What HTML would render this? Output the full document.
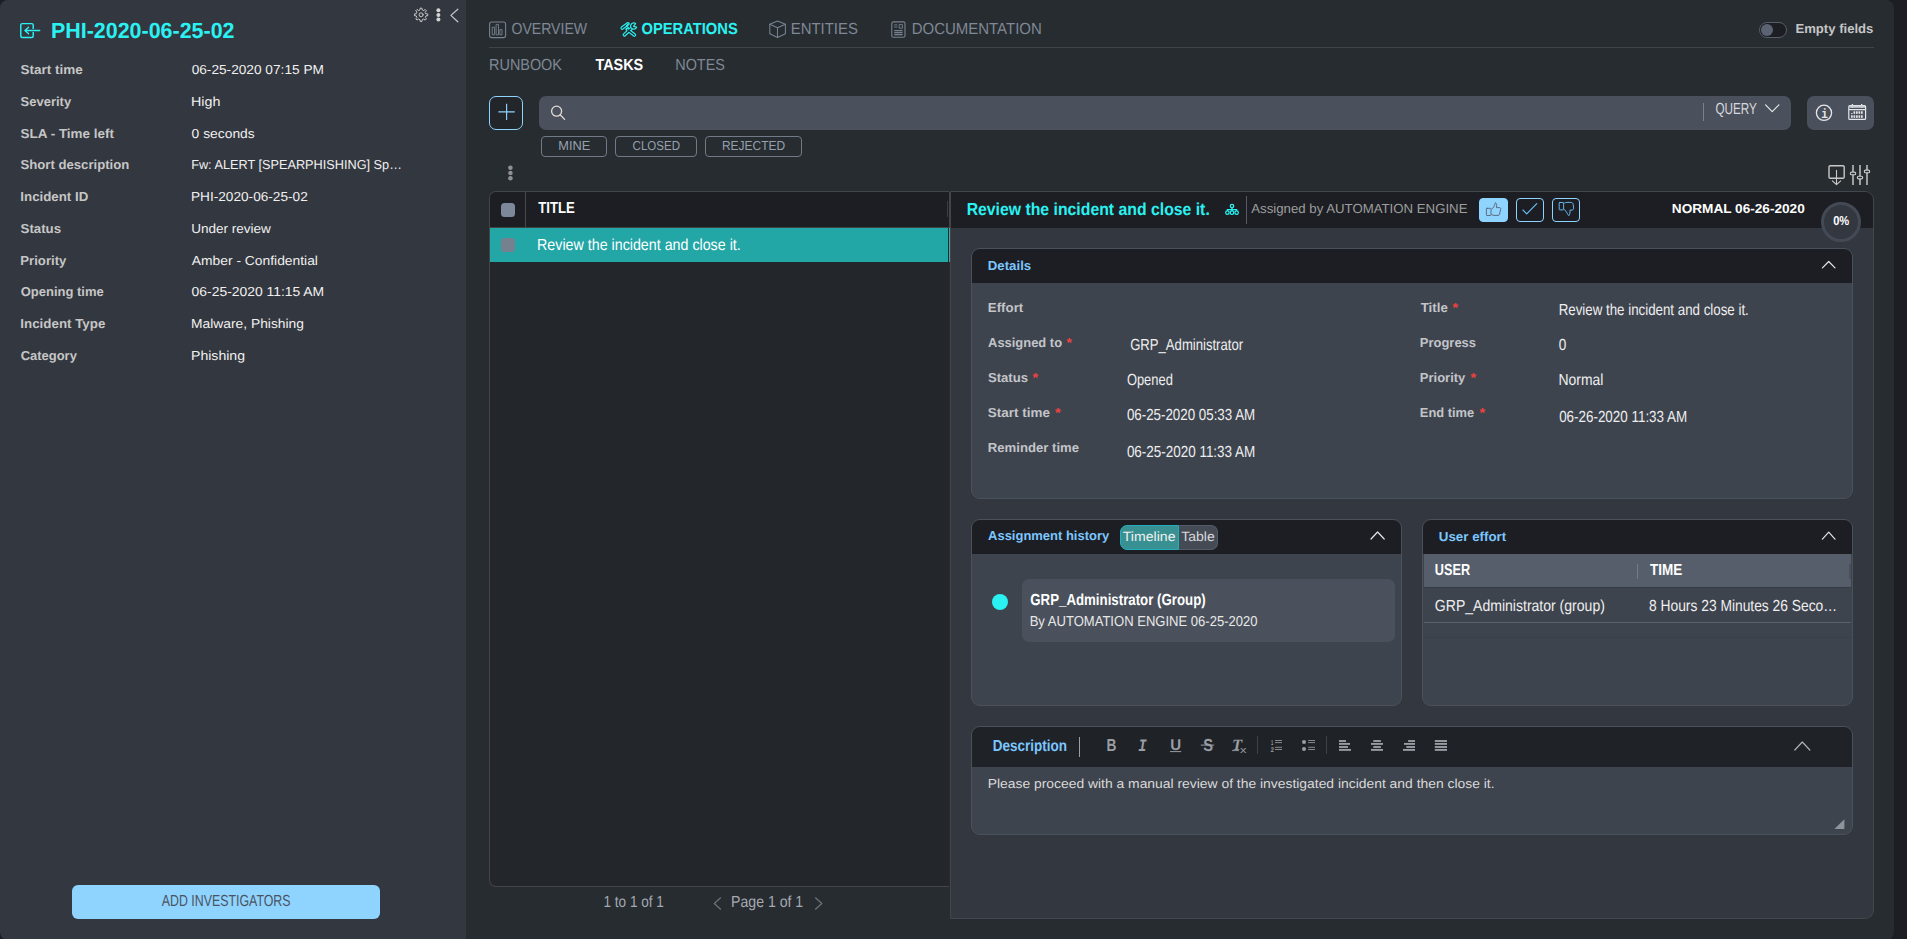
<!DOCTYPE html>
<html lang="en">
<head>
<meta charset="utf-8">
<title>PHI-2020-06-25-02 - Tasks</title>
<style>
*{box-sizing:border-box;margin:0;padding:0}
html,body{width:1907px;height:939px;overflow:hidden;background:#1c1e23}
body{position:relative;font-family:"Liberation Sans",sans-serif;font-size:13px;color:#e6e6e6}
.a{position:absolute}
.t{position:absolute;white-space:nowrap;line-height:1;transform-origin:0 0;text-rendering:geometricPrecision}
.b{font-weight:bold}
#app{position:absolute;left:0;top:0;width:1894px;height:940px;border-radius:8px;overflow:hidden;background:#272c31}
#side{position:absolute;left:0;top:0;width:466px;height:940px;background:#33373f}
#addinv{position:absolute;left:72px;top:885px;width:308px;height:34px;background:#8fd3ff;border-radius:6px}
.hr{position:absolute;background:#3f444b;height:1px}
.chip{position:absolute;height:21px;border:1px solid #727a87;border-radius:4px;top:136px}
#tbl{position:absolute;left:489px;top:191px;width:460px;height:696px;border:1px solid #444547;border-right:0;border-radius:7px 0 0 7px;background:#23262b;overflow:hidden}
#tbl .hd{position:absolute;left:0;top:0;width:460px;height:36px;background:#1c1e23;border-bottom:1px solid #434345}
#tbl .row{position:absolute;left:0;top:36px;width:458px;height:34px;background:#22a6a6}
.cb{position:absolute;width:14px;height:14px;border-radius:3.5px;background:#7d899b}
#det{position:absolute;left:950px;top:191px;width:924px;height:728px;border:1px solid #41464f;border-left:1px solid #454545;border-radius:0 9px 9px 0;background:#33373f;overflow:hidden}
#det .hd{position:absolute;left:0;top:0;right:0;height:36px;background:#1c1e23}
.card{position:absolute;border:1px solid #4b515b;border-radius:9px;background:#3e444e;overflow:hidden}
.card .ch{position:absolute;left:0;top:0;right:0;background:#1c1e23}
.btn{position:absolute;top:198px;width:29px;height:24px;border-radius:4px;border:1px solid #8fd3ff;background:#1c1e23}
svg{position:absolute;left:0;top:0;overflow:visible}
</style>
</head>
<body>
<div id="app">
  <div id="side">
    <div id="addinv"></div>
  </div>

  <div class="hr" style="left:489px;top:47px;width:1385px"></div>

  <!-- empty-fields toggle -->
  <div class="a" style="left:1759px;top:22px;width:28px;height:16px;border-radius:8px;background:#1c1e23;border:1px solid #575d6a"></div>
  <div class="a" style="left:1761px;top:24px;width:12px;height:12px;border-radius:6px;background:#5c6372"></div>

  <!-- toolbar row -->
  <div class="a" style="left:489px;top:96px;width:34px;height:34px;border:1.5px solid #8fd3ff;border-radius:7px;background:#22252a"></div>
  <div class="a" style="left:539px;top:96px;width:1252px;height:34px;border-radius:7px;background:#4a505c"></div>
  <div class="a" style="left:1703px;top:103px;width:1px;height:18px;background:#7a808b"></div>
  <div class="a" style="left:1807px;top:96px;width:67px;height:34px;border-radius:7px;background:#4a505c"></div>

  <div class="chip" style="left:541px;width:66px"></div>
  <div class="chip" style="left:615px;width:82px"></div>
  <div class="chip" style="left:705px;width:97px"></div>

  <!-- table -->
  <div id="tbl">
    <div class="hd"></div>
    <div class="a" style="left:35px;top:0;width:1px;height:36px;background:#47484b"></div>
    <div class="a" style="left:457px;top:9px;width:1px;height:16px;background:#3a3d44"></div>
    <div class="row"></div>
  </div>
  <div class="a" style="left:949px;top:192px;width:1px;height:36px;background:#454545"></div>
  <div class="a" style="left:949px;top:228px;width:1px;height:34px;background:#2ab0b0"></div>
  <div class="cb" style="left:501px;top:203px"></div>
  <div class="cb" style="left:501px;top:238px;background:#76818f"></div>

  <!-- detail panel -->
  <div id="det"><div class="hd"></div></div>
  <div class="a" style="left:1246px;top:196px;width:1px;height:28px;background:#555b67"></div>
  <div class="btn" style="left:1479px;background:#8fd3ff"></div>
  <div class="btn" style="left:1516px;width:28px"></div>
  <div class="btn" style="left:1552px;width:28px"></div>
  <div class="a" style="left:1821px;top:202px;width:40px;height:40px;border-radius:20px;border:3.3px solid #434a56;background:#33373f"></div>

  <!-- details card -->
  <div class="card" style="left:971px;top:248px;width:882px;height:251px"><div class="ch" style="height:34px"></div></div>

  <!-- assignment history card -->
  <div class="card" style="left:971px;top:519px;width:431px;height:187px"><div class="ch" style="height:34px"></div></div>
  <div class="a" style="left:1120px;top:525px;width:59px;height:25px;border-radius:7px 0 0 7px;background:#389092;border:1px solid #24aebb"></div>
  <div class="a" style="left:1179px;top:525px;width:39px;height:25px;border-radius:0 7px 7px 0;background:#454b55;border:1px solid #565c67;border-left:0"></div>
  <div class="a" style="left:1022px;top:579px;width:373px;height:63px;border-radius:7px;background:#4a505c"></div>
  <div class="a" style="left:992px;top:594px;width:16px;height:16px;border-radius:8px;background:#2af2f2"></div>

  <!-- user effort card -->
  <div class="card" style="left:1422px;top:519px;width:431px;height:187px">
    <div class="ch" style="height:34px"></div>
    <div class="a" style="left:1px;top:34px;width:427px;height:33px;background:#575e6b"></div>
    <div class="a" style="left:214px;top:44px;width:1px;height:15px;background:#737a87"></div>
    <div class="a" style="left:426px;top:44px;width:2px;height:15px;background:#4a505c"></div>
    <div class="a" style="left:1px;top:67px;width:427px;height:1px;background:#363b44"></div>
    <div class="a" style="left:1px;top:102px;width:427px;height:1px;background:#5a606c"></div>
    <div class="a" style="left:1px;top:117px;width:427px;height:1px;background:#393e47"></div>
  </div>

  <!-- description card -->
  <div class="card" style="left:971px;top:726px;width:882px;height:109px"><div class="ch" style="height:40px;background:#1f2227"></div></div>
  <div class="a" style="left:1079px;top:737px;width:1px;height:20px;background:#9aa0a8"></div>
  <div class="a" style="left:1257px;top:736px;width:1px;height:18px;background:#3d424b"></div>
  <div class="a" style="left:1326px;top:736px;width:1px;height:18px;background:#3d424b"></div>

<svg width="1907" height="939" viewBox="0 0 1907 939" fill="none" stroke-linecap="round" stroke-linejoin="round">
<g stroke="#2af2f2" stroke-width="1.45" stroke-linecap="round" stroke-linejoin="round"><path d="M33.2 29.0V25.1Q33.2 23.6 31.7 23.6H22.3Q20.8 23.6 20.8 25.1V35.9Q20.8 37.4 22.3 37.4H31.7Q33.2 37.4 33.2 35.9V32.0" stroke-linecap="butt"/><path d="M39.7 30.5H25M28.6 27.3L24.9 30.5L28.6 33.7"/></g>
<g stroke="#c9c9c9" stroke-width="1.0"><path d="M425.98 13.71 L427.74 13.91 L427.74 15.69 L425.98 15.89 L425.32 17.48 L426.43 18.86 L425.16 20.13 L423.78 19.02 L422.19 19.68 L421.99 21.44 L420.21 21.44 L420.01 19.68 L418.42 19.02 L417.04 20.13 L415.77 18.86 L416.88 17.48 L416.22 15.89 L414.46 15.69 L414.46 13.91 L416.22 13.71 L416.88 12.12 L415.77 10.74 L417.04 9.47 L418.42 10.58 L420.01 9.92 L420.21 8.16 L421.99 8.16 L422.19 9.92 L423.78 10.58 L425.16 9.47 L426.43 10.74 L425.32 12.12Z"/><circle cx="421.1" cy="14.8" r="2.0"/></g>
<g fill="#d4d4d4"><circle cx="438.4" cy="10.3" r="2"/><circle cx="438.4" cy="14.9" r="2"/><circle cx="438.4" cy="19.5" r="2"/></g>
<path d="M457.8 9.2L450.9 15.4L457.8 21.8" stroke="#c9c9c9" stroke-width="1.2"/>
<g stroke="#78828f" stroke-width="1.1"><rect x="489.6" y="22" width="16" height="15.6" rx="2"/><g stroke-width="0.9"><rect x="492.6" y="27.2" width="2" height="7.6"/><rect x="496.5" y="24.4" width="2" height="10.4"/><rect x="500.2" y="29.6" width="1.8" height="5.2"/></g></g>
<g stroke="#2af2f2" stroke-width="3.6"><path d="M624.4 34.8L631.2 28.6"/><path d="M627.2 29.4L634.4 35.0"/><path d="M622.2 28.0L628.0 23.8"/></g>
<g stroke="#272c31" stroke-width="1.3"><path d="M624.4 34.8L631.2 28.6"/><path d="M627.6 29.8L634.4 35.0"/><path d="M622.2 28.0L628.0 23.8"/></g>
<path d="M635.6 23.6A3.1 3.1 0 1 0 636.6 27.2L633.6 26.4Z" stroke="#2af2f2" stroke-width="1.2" fill="#272c31"/>
<path d="M628.3 23.6L626.2 26.0L628.6 27.6" stroke="#2af2f2" stroke-width="1.1"/>
<g stroke="#78828f" stroke-width="1.05"><path d="M777.5 21L785.4 24.3V33.8L777.5 37.5L769.8 33.8V24.3Z"/><path d="M769.8 24.3L777.5 27.8L785.4 24.3M777.5 27.8V37.5"/></g>
<g stroke="#78828f" stroke-width="1.1"><rect x="891.8" y="21.9" width="13.2" height="15.4" rx="1.6"/><g stroke-width="0.9" stroke-linecap="butt"><path d="M894.2 24.9H897.4M894.2 27H897.4"/><rect x="899.2" y="24.6" width="3.2" height="3.6"/><path d="M894.2 30.6H902.6M894.2 32.6H902.6M894.2 34.6H902.6" stroke-width="1.3"/></g></g>
<path d="M498.4 111.9H514.8M506.6 103.7V120.1" stroke="#8fd3ff" stroke-width="1.15" stroke-linecap="butt"/>
<g stroke="#e2ddd6" stroke-width="1.3"><circle cx="556.6" cy="111.2" r="5"/><path d="M560.4 115L564.6 119.4"/></g>
<path d="M1765.6 104.9L1772.2 111.6L1778.9 104.9" stroke="#e4e6e9" stroke-width="1.2"/>
<g stroke="#e4e6e9"><circle cx="1824" cy="112.8" r="7.6" stroke-width="1.3"/></g>
<g stroke="#e4e6e9" stroke-width="1.2" stroke-linecap="butt" stroke-linejoin="miter"><rect x="1848.8" y="105.6" width="16.8" height="13.8" rx="1"/><path d="M1848.8 109.7H1865.6"/><path d="M1852.4 104V108M1861.7 104V108" stroke-width="1.3"/></g>
<rect x="1849.4" y="105.8" width="15.6" height="2" fill="#c9ccd1"/>
<g fill="#e4e6e9"><rect x="1853.5" y="111.3" width="1.7" height="2.5"/><rect x="1856.0" y="111.3" width="1.7" height="2.5"/><rect x="1858.5" y="111.3" width="1.7" height="2.5"/><rect x="1861.0" y="111.3" width="1.7" height="2.5"/><rect x="1851.0" y="115.3" width="1.7" height="2.5"/><rect x="1853.5" y="115.3" width="1.7" height="2.5"/><rect x="1856.0" y="115.3" width="1.7" height="2.5"/><rect x="1858.5" y="115.3" width="1.7" height="2.5"/><rect x="1861.0" y="115.3" width="1.7" height="2.5"/><rect x="1851" y="113" width="1.7" height="0.8"/></g>
<g fill="#8e9093"><circle cx="510.4" cy="167.8" r="2.3"/><circle cx="510.4" cy="173" r="2.3"/><circle cx="510.4" cy="178.2" r="2.3"/></g>
<g stroke="#c9c9c9"><rect x="1829" y="165.7" width="15.2" height="12.6" rx="1.3" stroke-width="1.4"/><path d="M1836.5 170.2V184.4M1832.4 180.8L1836.5 184.7L1840.7 180.8" stroke-width="1.1"/></g>
<g stroke="#c9c9c9" stroke-width="1.45" stroke-linecap="butt"><path d="M1853 165V185M1860 165V185M1867 165V185"/></g>
<rect x="1850.3" y="172.1" width="5.4" height="2.6" rx="1.3" fill="#272c31" stroke="#c9c9c9" stroke-width="1.1"/>
<rect x="1857.3" y="176.29999999999998" width="5.4" height="2.6" rx="1.3" fill="#272c31" stroke="#c9c9c9" stroke-width="1.1"/>
<rect x="1864.3" y="170.1" width="5.4" height="2.6" rx="1.3" fill="#272c31" stroke="#c9c9c9" stroke-width="1.1"/>
<g stroke="#2af2f2" stroke-width="1.25"><circle cx="1232" cy="206.1" r="1.75"/><circle cx="1227.4" cy="212.7" r="1.75"/><circle cx="1232" cy="212.7" r="1.75"/><circle cx="1236.6" cy="212.7" r="1.75"/><path d="M1232 208V211M1227.4 211V209.5H1236.6V211" stroke-linecap="butt" stroke-linejoin="miter"/></g>
<g stroke="#566472" stroke-width="0.9"><rect x="1486.4" y="208.3" width="4.6" height="7.2" rx="0.6"/><path d="M1491.8 209.2C1493.6 207.8 1494.6 205.4 1495.3 202.8C1496.6 203 1497 205 1496.4 207.6H1499.6C1500.6 207.6 1500.9 208.6 1500.6 209.4L1499.6 214.2C1499.4 215 1498.8 215.4 1498 215.4H1494C1493.2 215.4 1492.6 214.9 1491.8 214.6"/></g>
<path d="M1522.6 209.7L1526.7 213.8L1537 203.4" stroke="#6cc4ff" stroke-width="1.1" stroke-linecap="butt"/>
<g stroke="#6cc4ff" stroke-width="0.9"><rect x="1559.2" y="202.5" width="4.4" height="7.4" rx="0.6"/><path d="M1564.6 203C1565.4 202.5 1566 202.4 1567 202.4H1571C1572.2 202.4 1573 203.2 1573.2 204.4L1573.6 208C1573.7 209.2 1573 210.1 1572 210.1H1569.9C1570.3 212.2 1569.9 214.6 1568.8 215.7C1567.4 214.2 1566.6 211.6 1564.6 209.6"/></g>
<path d="M1822.4 267.8L1828.7 261.5L1835 267.8" stroke="#e4e6e9" stroke-width="1.2"/>
<path d="M1371 539L1377.6 532L1384.2 539" stroke="#e4e6e9" stroke-width="1.2"/>
<path d="M1822.4 539.2L1828.7 532.2L1835 539.2" stroke="#e4e6e9" stroke-width="1.2"/>
<path d="M1794.8 750L1802.3 742L1809.8 750" stroke="#aeb2b8" stroke-width="1.2"/>
<path d="M720.6 897.8L714.3 903.5L720.6 909.2" stroke="#6e737c" stroke-width="1.2"/>
<path d="M815.5 897.8L821.8 903.5L815.5 909.2" stroke="#6e737c" stroke-width="1.2"/>
<g stroke="#9a9da3" stroke-width="0.85" stroke-linecap="butt">
<path d="M1275 740.5H1282M1308.2 740.5H1315"/>
<path d="M1275 742.6H1282M1308.2 742.6H1315"/>
<path d="M1275 747.3H1282M1308.2 747.3H1315"/>
<path d="M1275 749.5H1282M1308.2 749.5H1315"/>
</g>
<g fill="#9a9da3"><circle cx="1304" cy="742" r="2.05"/><circle cx="1304" cy="749" r="2.05"/></g>
<g stroke="#9a9da3" stroke-width="1.9" stroke-linecap="butt">
<path d="M1339 741H1346"/>
<path d="M1339 743.9H1350"/>
<path d="M1339 747H1348"/>
<path d="M1339 749.9H1351"/>
<path d="M1373.3 741H1380.9"/>
<path d="M1371 743.9H1383"/>
<path d="M1373.3 747H1380.9"/>
<path d="M1371 749.9H1383"/>
<path d="M1408.1 741H1415"/>
<path d="M1404 743.9H1415"/>
<path d="M1406.3 747H1415"/>
<path d="M1403 749.9H1415"/>
<path d="M1434.8 741H1447"/>
<path d="M1434.8 743.9H1447"/>
<path d="M1434.8 747H1447"/>
<path d="M1434.8 749.9H1447"/>
</g>
<g stroke="#9a9da3" stroke-linecap="butt"><path d="M1170 751.6H1181.2" stroke-width="1"/><path d="M1200.8 745.1H1214.2" stroke-width="1"/><path d="M1232 750.6H1239" stroke-width="0.9"/></g>
<path d="M1844.4 819.2V829H1834.4Z" fill="#8f949c" stroke="none"/>
</svg>
<div class="t" style="left:50px;top:20px;font-size:21.9px;color:#2af2f2;transform:translateX(0.93px) scaleX(0.9798);font-weight:bold">PHI-2020-06-25-02</div>
<div class="t" style="left:20px;top:63px;font-size:13.0px;color:#c6c6c6;transform:translateX(0.54px) scaleX(1.0398);font-weight:bold">Start time</div>
<div class="t" style="left:191px;top:63px;font-size:13.0px;color:#f0f0f0;transform:translateX(0.63px) scaleX(1.0518)">06-25-2020 07:15 PM</div>
<div class="t" style="left:20px;top:95px;font-size:13.0px;color:#c6c6c6;transform:translateX(0.58px) scaleX(0.9991);font-weight:bold">Severity</div>
<div class="t" style="left:190px;top:95px;font-size:13.0px;color:#f0f0f0;transform:translateX(0.97px) scaleX(1.0993)">High</div>
<div class="t" style="left:20px;top:127px;font-size:13.0px;color:#c6c6c6;transform:translateX(0.54px) scaleX(1.0348);font-weight:bold">SLA - Time left</div>
<div class="t" style="left:191px;top:127px;font-size:13.0px;color:#f0f0f0;transform:translateX(0.60px) scaleX(1.0648)">0 seconds</div>
<div class="t" style="left:20px;top:158px;font-size:13.0px;color:#c6c6c6;transform:translateX(0.58px) scaleX(1.0096);font-weight:bold">Short description</div>
<div class="t" style="left:191px;top:158px;font-size:13.0px;color:#f0f0f0;transform:translateX(0.13px) scaleX(0.9778)">Fw: ALERT [SPEARPHISHING] Sp…</div>
<div class="t" style="left:20px;top:190px;font-size:13.0px;color:#c6c6c6;transform:translateX(0.32px) scaleX(1.0223);font-weight:bold">Incident ID</div>
<div class="t" style="left:190px;top:190px;font-size:13.0px;color:#f0f0f0;transform:translateX(0.92px) scaleX(1.0499)">PHI-2020-06-25-02</div>
<div class="t" style="left:20px;top:222px;font-size:13.0px;color:#c6c6c6;transform:translateX(0.54px) scaleX(1.0210);font-weight:bold">Status</div>
<div class="t" style="left:191px;top:222px;font-size:13.0px;color:#f0f0f0;transform:translateX(0.18px) scaleX(1.0398)">Under review</div>
<div class="t" style="left:20px;top:254px;font-size:13.0px;color:#c6c6c6;transform:translateX(0.34px) scaleX(1.0105);font-weight:bold">Priority</div>
<div class="t" style="left:191px;top:254px;font-size:13.0px;color:#f0f0f0;transform:translateX(0.82px) scaleX(1.0643)">Amber - Confidential</div>
<div class="t" style="left:20px;top:285px;font-size:13.0px;color:#c6c6c6;transform:translateX(0.66px) scaleX(1.0004);font-weight:bold">Opening time</div>
<div class="t" style="left:191px;top:285px;font-size:13.0px;color:#f0f0f0;transform:translateX(0.60px) scaleX(1.0686)">06-25-2020 11:15 AM</div>
<div class="t" style="left:20px;top:317px;font-size:13.0px;color:#c6c6c6;transform:translateX(0.32px) scaleX(1.0268);font-weight:bold">Incident Type</div>
<div class="t" style="left:191px;top:317px;font-size:13.0px;color:#f0f0f0;transform:translateX(0.10px) scaleX(1.0626)">Malware, Phishing</div>
<div class="t" style="left:20px;top:349px;font-size:13.0px;color:#c6c6c6;transform:translateX(0.68px) scaleX(0.9966);font-weight:bold">Category</div>
<div class="t" style="left:191px;top:349px;font-size:13.0px;color:#f0f0f0;transform:translateX(0.03px) scaleX(1.0820)">Phishing</div>
<div class="t" style="left:161px;top:894px;font-size:16.0px;color:#4a5361;transform:translateX(0.76px) scaleX(0.7731)">ADD INVESTIGATORS</div>
<div class="t" style="left:511px;top:22px;font-size:16.0px;color:#7f8894;transform:translateX(0.45px) scaleX(0.8804)">OVERVIEW</div>
<div class="t" style="left:641px;top:22px;font-size:16.0px;color:#2af2f2;transform:translateX(0.45px) scaleX(0.9202);font-weight:bold">OPERATIONS</div>
<div class="t" style="left:790px;top:22px;font-size:16.0px;color:#7f8894;transform:translateX(0.79px) scaleX(0.9316)">ENTITIES</div>
<div class="t" style="left:911px;top:22px;font-size:16.0px;color:#7f8894;transform:translateX(0.67px) scaleX(0.9364)">DOCUMENTATION</div>
<div class="t" style="left:489px;top:58px;font-size:16.0px;color:#7f8894;transform:translateX(0.06px) scaleX(0.9009)">RUNBOOK</div>
<div class="t" style="left:595px;top:58px;font-size:16.0px;color:#ffffff;transform:translateX(0.43px) scaleX(0.8998);font-weight:bold">TASKS</div>
<div class="t" style="left:675px;top:58px;font-size:16.0px;color:#7f8894;transform:translateX(0.26px) scaleX(0.9000)">NOTES</div>
<div class="t" style="left:1795px;top:22px;font-size:13.0px;color:#c6c6c6;transform:translateX(0.46px) scaleX(1.0079);font-weight:bold">Empty fields</div>
<div class="t" style="left:1715px;top:102px;font-size:16.0px;color:#d6d8dc;transform:translateX(0.42px) scaleX(0.7326)">QUERY</div>
<div class="t" style="left:558px;top:139px;font-size:13.0px;color:#96a0ad;transform:translateX(0.29px) scaleX(0.9854)">MINE</div>
<div class="t" style="left:632px;top:139px;font-size:13.0px;color:#96a0ad;transform:translateX(0.56px) scaleX(0.8891)">CLOSED</div>
<div class="t" style="left:721px;top:139px;font-size:13.0px;color:#96a0ad;transform:translateX(0.98px) scaleX(0.9199)">REJECTED</div>
<div class="t" style="left:538px;top:201px;font-size:16.0px;color:#ffffff;transform:translateX(0.29px) scaleX(0.8225);font-weight:bold">TITLE</div>
<div class="t" style="left:537px;top:238px;font-size:16.0px;color:#ffffff;transform:translateX(0.07px) scaleX(0.8910)">Review the incident and close it.</div>
<div class="t" style="left:603px;top:895px;font-size:16.0px;color:#a5a9b0;transform:translateX(0.55px) scaleX(0.8469)">1 to 1 of 1</div>
<div class="t" style="left:731px;top:895px;font-size:16.0px;color:#a5a9b0;transform:translateX(0.04px) scaleX(0.8812)">Page 1 of 1</div>
<div class="t" style="left:966px;top:201px;font-size:17.4px;color:#2af2f2;transform:translateX(0.63px) scaleX(0.9083);font-weight:bold">Review the incident and close it.</div>
<div class="t" style="left:1251px;top:202px;font-size:13.2px;color:#9e9e9e;transform:translateX(0.26px) scaleX(1.0023)">Assigned by AUTOMATION ENGINE</div>
<div class="t" style="left:1671px;top:202px;font-size:13.0px;color:#ffffff;transform:translateX(0.81px) scaleX(1.0476);font-weight:bold">NORMAL 06-26-2020</div>
<div class="t" style="left:1833px;top:214px;font-size:13.0px;color:#ffffff;transform:translateX(0.14px) scaleX(0.8553);font-weight:bold">0%</div>
<div class="t" style="left:987px;top:259px;font-size:13.0px;color:#7cc7ff;transform:translateX(0.78px) scaleX(1.0178);font-weight:bold">Details</div>
<div class="t" style="left:987px;top:301px;font-size:13.0px;color:#c3c5c9;transform:translateX(0.80px) scaleX(1.0230);font-weight:bold">Effort</div>
<div class="t" style="left:988px;top:336px;font-size:13.0px;color:#c3c5c9;transform:translateX(0.04px) scaleX(0.9945);font-weight:bold">Assigned to</div>
<div class="t" style="left:1066px;top:336px;font-size:13.0px;color:#f0423f;transform:translateX(0.54px) scaleX(1.0581);font-weight:bold">*</div>
<div class="t" style="left:987px;top:371px;font-size:13.0px;color:#c3c5c9;transform:translateX(0.89px) scaleX(1.0090);font-weight:bold">Status</div>
<div class="t" style="left:1032px;top:371px;font-size:13.0px;color:#f0423f;transform:translateX(0.54px) scaleX(1.1137);font-weight:bold">*</div>
<div class="t" style="left:987px;top:406px;font-size:13.0px;color:#c3c5c9;transform:translateX(0.86px) scaleX(1.0355);font-weight:bold">Start time</div>
<div class="t" style="left:1055px;top:406px;font-size:13.0px;color:#f0423f;transform:translateX(0.04px) scaleX(1.1182);font-weight:bold">*</div>
<div class="t" style="left:987px;top:441px;font-size:13.0px;color:#c3c5c9;transform:translateX(0.80px) scaleX(1.0110);font-weight:bold">Reminder time</div>
<div class="t" style="left:1130px;top:338px;font-size:16.0px;color:#eeeeee;transform:translateX(0.18px) scaleX(0.8189)">GRP_Administrator</div>
<div class="t" style="left:1126px;top:373px;font-size:16.0px;color:#eeeeee;transform:translateX(0.90px) scaleX(0.8062)">Opened</div>
<div class="t" style="left:1126px;top:408px;font-size:16.0px;color:#eeeeee;transform:translateX(0.89px) scaleX(0.8337)">06-25-2020 05:33 AM</div>
<div class="t" style="left:1126px;top:445px;font-size:16.0px;color:#eeeeee;transform:translateX(0.88px) scaleX(0.8405)">06-25-2020 11:33 AM</div>
<div class="t" style="left:1420px;top:301px;font-size:13.0px;color:#c3c5c9;transform:translateX(0.74px) scaleX(1.0203);font-weight:bold">Title</div>
<div class="t" style="left:1452px;top:301px;font-size:13.0px;color:#f0423f;transform:translateX(0.54px) scaleX(1.1137);font-weight:bold">*</div>
<div class="t" style="left:1419px;top:336px;font-size:13.0px;color:#c3c5c9;transform:translateX(0.84px) scaleX(0.9969);font-weight:bold">Progress</div>
<div class="t" style="left:1419px;top:371px;font-size:13.0px;color:#c3c5c9;transform:translateX(0.86px) scaleX(0.9979);font-weight:bold">Priority</div>
<div class="t" style="left:1470px;top:371px;font-size:13.0px;color:#f0423f;transform:translateX(0.54px) scaleX(1.1137);font-weight:bold">*</div>
<div class="t" style="left:1419px;top:406px;font-size:13.0px;color:#c3c5c9;transform:translateX(0.84px) scaleX(0.9908);font-weight:bold">End time</div>
<div class="t" style="left:1479px;top:406px;font-size:13.0px;color:#f0423f;transform:translateX(0.54px) scaleX(1.1137);font-weight:bold">*</div>
<div class="t" style="left:1558px;top:303px;font-size:16.0px;color:#eeeeee;transform:translateX(0.67px) scaleX(0.8317)">Review the incident and close it.</div>
<div class="t" style="left:1558px;top:338px;font-size:16.0px;color:#eeeeee;transform:translateX(0.84px) scaleX(0.8488)">0</div>
<div class="t" style="left:1558px;top:373px;font-size:16.0px;color:#eeeeee;transform:translateX(0.56px) scaleX(0.8689)">Normal</div>
<div class="t" style="left:1559px;top:410px;font-size:16.0px;color:#eeeeee;transform:translateX(0.13px) scaleX(0.8382)">06-26-2020 11:33 AM</div>
<div class="t" style="left:988px;top:529px;font-size:13.0px;color:#7cc7ff;transform:translateX(0.04px) scaleX(0.9986);font-weight:bold">Assignment history</div>
<div class="t" style="left:1122px;top:530px;font-size:13.3px;color:#f0f0f0;transform:translateX(0.80px) scaleX(1.0584)">Timeline</div>
<div class="t" style="left:1181px;top:530px;font-size:13.3px;color:#d6d8db;transform:translateX(0.19px) scaleX(1.0577)">Table</div>
<div class="t" style="left:1030px;top:593px;font-size:16.0px;color:#ffffff;transform:translateX(0.24px) scaleX(0.8295);font-weight:bold">GRP_Administrator (Group)</div>
<div class="t" style="left:1029px;top:615px;font-size:14.4px;color:#e8e8e8;transform:translateX(0.65px) scaleX(0.9066)">By AUTOMATION ENGINE 06-25-2020</div>
<div class="t" style="left:1438px;top:530px;font-size:13.0px;color:#7cc7ff;transform:translateX(0.80px) scaleX(1.0260);font-weight:bold">User effort</div>
<div class="t" style="left:1434px;top:563px;font-size:16.0px;color:#ffffff;transform:translateX(0.82px) scaleX(0.7920);font-weight:bold">USER</div>
<div class="t" style="left:1650px;top:563px;font-size:16.0px;color:#ffffff;transform:translateX(0.01px) scaleX(0.8414);font-weight:bold">TIME</div>
<div class="t" style="left:1434px;top:599px;font-size:16.0px;color:#eeeeee;transform:translateX(0.87px) scaleX(0.8769)">GRP_Administrator (group)</div>
<div class="t" style="left:1649px;top:599px;font-size:16.0px;color:#eeeeee;transform:translateX(0.01px) scaleX(0.8631)">8 Hours 23 Minutes 26 Seco…</div>
<div class="t" style="left:992px;top:739px;font-size:16.0px;color:#7cc7ff;transform:translateX(0.65px) scaleX(0.8449);font-weight:bold">Description</div>
<div class="t" style="left:987px;top:777px;font-size:13.0px;color:#d9d9d9;transform:translateX(0.67px) scaleX(1.0676)">Please proceed with a manual review of the investigated incident and then close it.</div>
<div class="t" style="left:1106px;top:737px;font-size:17.4px;color:#9a9da3;transform:translateX(0.55px) scaleX(0.7927);font-weight:bold">B</div>
<div class="t" style="left:1138px;top:739px;font-size:17.4px;color:#9a9da3;transform:translateX(0.15px) scaleX(0.8105);font-weight:bold;font-family:'Liberation Mono',monospace;font-style:italic">I</div>
<div class="t" style="left:1170px;top:738px;font-size:15.6px;color:#9a9da3;transform:translateX(0.29px) scaleX(0.9688);font-weight:bold">U</div>
<div class="t" style="left:1203px;top:737px;font-size:17.4px;color:#9a9da3;transform:translateX(0.14px) scaleX(0.8487);font-weight:bold">S</div>
<div class="t" style="left:1231px;top:738px;font-size:15.6px;color:#9a9da3;transform:translateX(0.98px) scaleX(1.0684);font-weight:bold;font-family:'Liberation Serif',serif;font-style:italic">T</div>
<div class="t" style="left:1270px;top:741px;font-size:6.8px;color:#9a9da3;transform:translateX(0.96px) scaleX(0.6000);font-weight:bold">1</div>
<div class="t" style="left:1270px;top:748px;font-size:6.8px;color:#9a9da3;transform:translateX(0.76px) scaleX(0.8385);font-weight:bold">2</div>
<div class="t" style="left:1239px;top:745px;font-size:9.4px;color:#9a9da3;transform:translateX(0.95px) scaleX(1.3741)">x</div>
<div class="t" style="left:1821px;top:109px;font-size:13.4px;color:#e4e6e9;transform:translateX(0.29px) scaleX(0.8186);font-weight:bold;font-family:'Liberation Mono',monospace">i</div>
</div>
</body>
</html>
